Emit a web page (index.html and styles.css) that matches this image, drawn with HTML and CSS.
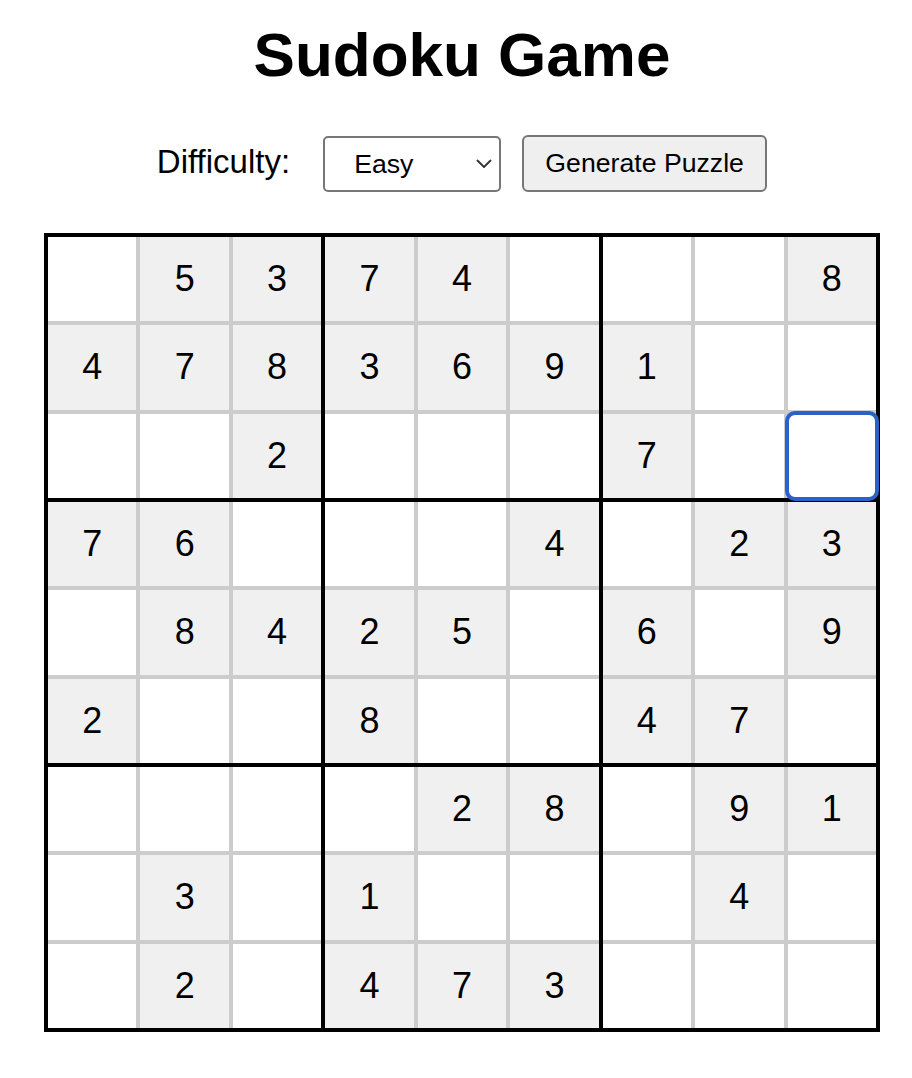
FILE: index.html
```html
<!DOCTYPE html>
<html lang="en">
<head>
<meta charset="utf-8">
<title>Sudoku Game</title>
<link rel="stylesheet" href="styles.css">
</head>
<body>
<div class="app">
  <h1 class="title">Sudoku Game</h1>
  <div class="controls">
    <label class="label" for="difficulty">Difficulty:</label>
    <div class="select-wrap">
      <select id="difficulty" class="select">
        <option>Easy</option>
        <option>Medium</option>
        <option>Hard</option>
      </select>
      <svg class="chevron" width="16" height="10" viewBox="0 0 16 10"><path d="M1.5 1.5 L8 8 L14.5 1.5" fill="none" stroke="#333" stroke-width="1.8" stroke-linecap="round" stroke-linejoin="round"/></svg>
    </div>
    <button class="btn">Generate Puzzle</button>
  </div>
  <div class="board">
    <div class="box">
      <div class="cell"></div><div class="cell given">5</div><div class="cell given">3</div>
      <div class="cell given">4</div><div class="cell given">7</div><div class="cell given">8</div>
      <div class="cell"></div><div class="cell"></div><div class="cell given">2</div>
    </div>
    <div class="box">
      <div class="cell given">7</div><div class="cell given">4</div><div class="cell"></div>
      <div class="cell given">3</div><div class="cell given">6</div><div class="cell given">9</div>
      <div class="cell"></div><div class="cell"></div><div class="cell"></div>
    </div>
    <div class="box">
      <div class="cell"></div><div class="cell"></div><div class="cell given">8</div>
      <div class="cell given">1</div><div class="cell"></div><div class="cell"></div>
      <div class="cell given">7</div><div class="cell"></div><div class="cell selected"></div>
    </div>
    <div class="box">
      <div class="cell given">7</div><div class="cell given">6</div><div class="cell"></div>
      <div class="cell"></div><div class="cell given">8</div><div class="cell given">4</div>
      <div class="cell given">2</div><div class="cell"></div><div class="cell"></div>
    </div>
    <div class="box">
      <div class="cell"></div><div class="cell"></div><div class="cell given">4</div>
      <div class="cell given">2</div><div class="cell given">5</div><div class="cell"></div>
      <div class="cell given">8</div><div class="cell"></div><div class="cell"></div>
    </div>
    <div class="box">
      <div class="cell"></div><div class="cell given">2</div><div class="cell given">3</div>
      <div class="cell given">6</div><div class="cell"></div><div class="cell given">9</div>
      <div class="cell given">4</div><div class="cell given">7</div><div class="cell"></div>
    </div>
    <div class="box">
      <div class="cell"></div><div class="cell"></div><div class="cell"></div>
      <div class="cell"></div><div class="cell given">3</div><div class="cell"></div>
      <div class="cell"></div><div class="cell given">2</div><div class="cell"></div>
    </div>
    <div class="box">
      <div class="cell"></div><div class="cell given">2</div><div class="cell given">8</div>
      <div class="cell given">1</div><div class="cell"></div><div class="cell"></div>
      <div class="cell given">4</div><div class="cell given">7</div><div class="cell given">3</div>
    </div>
    <div class="box">
      <div class="cell"></div><div class="cell given">9</div><div class="cell given">1</div>
      <div class="cell"></div><div class="cell given">4</div><div class="cell"></div>
      <div class="cell"></div><div class="cell"></div><div class="cell"></div>
    </div>
  </div>
</div>
</body>
</html>
```

FILE: styles.css
```css
html, body {
  margin: 0;
  padding: 0;
  background: #fff;
}

body {
  font-family: "Liberation Sans", Arial, sans-serif;
  color: #000;
}

.app {
  width: 900px;
  margin-left: 12px;
  padding-top: 19px;
  display: flex;
  flex-direction: column;
  align-items: center;
}

.title {
  margin: 0;
  font-size: 62px;
  line-height: 72px;
  font-weight: bold;
}

.controls {
  margin-top: 44px;
  display: flex;
  align-items: center;
  justify-content: center;
  height: 57px;
}

.label {
  font-size: 33px;
  margin-right: 33px;
  margin-top: -4px;
}

.select-wrap {
  position: relative;
  margin-right: 21px;
}

.select {
  -webkit-appearance: none;
  appearance: none;
  display: block;
  width: 178px;
  height: 56px;
  box-sizing: border-box;
  border: 2px solid #767676;
  border-radius: 5px;
  background: #fff;
  font-family: "Liberation Sans", Arial, sans-serif;
  font-size: 26.67px;
  color: #000;
  padding: 0 0 0 29px;
}

.chevron {
  position: absolute;
  right: 9px;
  top: 23px;
  pointer-events: none;
}

.btn {
  width: 245px;
  height: 57px;
  box-sizing: border-box;
  border: 2px solid #767676;
  border-radius: 6px;
  background: #efefef;
  font-family: "Liberation Sans", Arial, sans-serif;
  font-size: 26.67px;
  color: #000;
  padding: 0;
}

.board {
  margin-top: 41px;
  width: 836px;
  height: 799px;
  box-sizing: border-box;
  border: 4px solid #000;
  background: #000;
  display: grid;
  grid-template-columns: repeat(3, 1fr);
  grid-template-rows: repeat(3, 1fr);
  gap: 4px;
}

.box {
  display: grid;
  grid-template-columns: repeat(3, 1fr);
  grid-template-rows: repeat(3, 1fr);
  gap: 4px;
  background: #ccc;
}

.cell {
  background: #fff;
  display: flex;
  align-items: center;
  justify-content: center;
  font-size: 36px;
  color: #000;
}

.cell.given {
  background: #f0f0f0;
}

.cell.selected {
  position: relative;
  z-index: 1;
  border-radius: 7px;
  outline: 4px solid #2a62c9;
  outline-offset: -1px;
}
```
